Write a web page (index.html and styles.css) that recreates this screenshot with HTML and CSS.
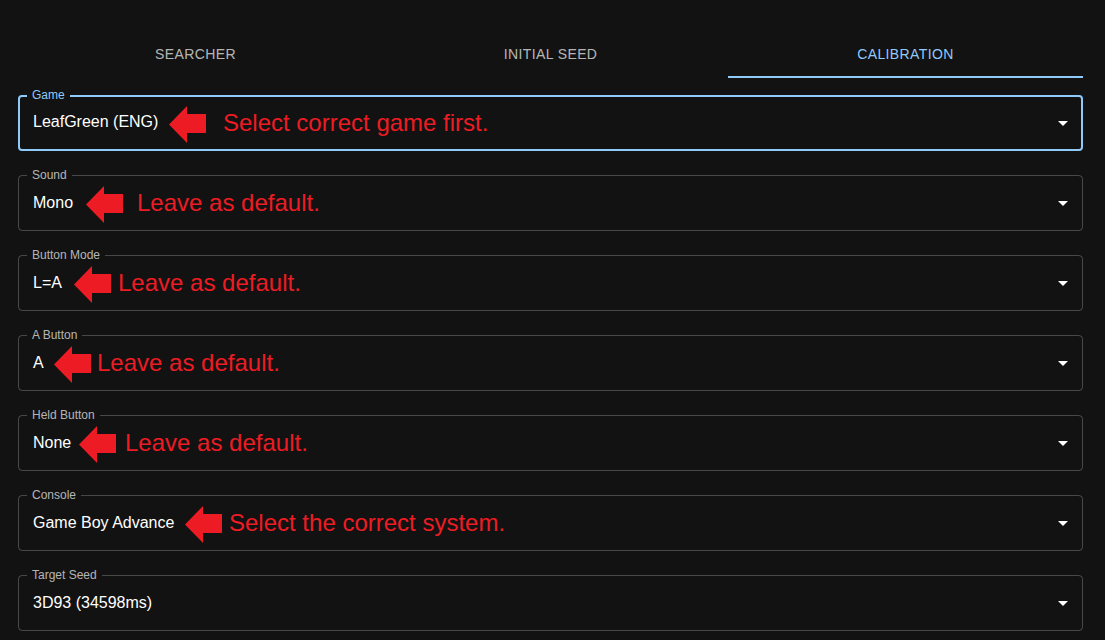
FILE: index.html
```html
<!DOCTYPE html>
<html lang="en">
<head>
<meta charset="utf-8">
<title>Calibration</title>
<link rel="stylesheet" href="styles.css">
</head>
<body>
<div class="page">
  <nav class="tabs">
    <div class="tab">Searcher</div>
    <div class="tab">Initial Seed</div>
    <div class="tab tab--active">Calibration</div>
  </nav>

  <form class="form">
    <div class="field field--focused">
      <span class="field__label">Game</span>
      <span class="field__value">LeafGreen (ENG)</span>
      <div class="note note--game">
        <svg class="note__arrow" viewBox="0 0 37 37" width="37" height="37"><polygon points="0,18.5 18,0 18,8 37,8 37,27 18,27 18,37" fill="#ed1c24"/></svg>
        <span class="note__text">Select correct game first.</span>
      </div>
      <svg class="field__icon" viewBox="0 0 24 24" width="24" height="24"><path d="M7 10l5 5 5-5z" fill="#fff"/></svg>
    </div>

    <div class="field">
      <span class="field__label">Sound</span>
      <span class="field__value">Mono</span>
      <div class="note note--sound">
        <svg class="note__arrow" viewBox="0 0 37 37" width="37" height="37"><polygon points="0,18.5 18,0 18,8 37,8 37,27 18,27 18,37" fill="#ed1c24"/></svg>
        <span class="note__text">Leave as default.</span>
      </div>
      <svg class="field__icon" viewBox="0 0 24 24" width="24" height="24"><path d="M7 10l5 5 5-5z" fill="#fff"/></svg>
    </div>

    <div class="field">
      <span class="field__label">Button Mode</span>
      <span class="field__value">L=A</span>
      <div class="note note--mode">
        <svg class="note__arrow" viewBox="0 0 37 37" width="37" height="37"><polygon points="0,18.5 18,0 18,8 37,8 37,27 18,27 18,37" fill="#ed1c24"/></svg>
        <span class="note__text">Leave as default.</span>
      </div>
      <svg class="field__icon" viewBox="0 0 24 24" width="24" height="24"><path d="M7 10l5 5 5-5z" fill="#fff"/></svg>
    </div>

    <div class="field">
      <span class="field__label">A Button</span>
      <span class="field__value">A</span>
      <div class="note note--abutton">
        <svg class="note__arrow" viewBox="0 0 37 37" width="37" height="37"><polygon points="0,18.5 18,0 18,8 37,8 37,27 18,27 18,37" fill="#ed1c24"/></svg>
        <span class="note__text">Leave as default.</span>
      </div>
      <svg class="field__icon" viewBox="0 0 24 24" width="24" height="24"><path d="M7 10l5 5 5-5z" fill="#fff"/></svg>
    </div>

    <div class="field">
      <span class="field__label">Held Button</span>
      <span class="field__value">None</span>
      <div class="note note--held">
        <svg class="note__arrow" viewBox="0 0 37 37" width="37" height="37"><polygon points="0,18.5 18,0 18,8 37,8 37,27 18,27 18,37" fill="#ed1c24"/></svg>
        <span class="note__text">Leave as default.</span>
      </div>
      <svg class="field__icon" viewBox="0 0 24 24" width="24" height="24"><path d="M7 10l5 5 5-5z" fill="#fff"/></svg>
    </div>

    <div class="field">
      <span class="field__label">Console</span>
      <span class="field__value">Game Boy Advance</span>
      <div class="note note--console">
        <svg class="note__arrow" viewBox="0 0 37 37" width="37" height="37"><polygon points="0,18.5 18,0 18,8 37,8 37,27 18,27 18,37" fill="#ed1c24"/></svg>
        <span class="note__text">Select the correct system.</span>
      </div>
      <svg class="field__icon" viewBox="0 0 24 24" width="24" height="24"><path d="M7 10l5 5 5-5z" fill="#fff"/></svg>
    </div>

    <div class="field">
      <span class="field__label">Target Seed</span>
      <span class="field__value">3D93 (34598ms)</span>
      <svg class="field__icon" viewBox="0 0 24 24" width="24" height="24"><path d="M7 10l5 5 5-5z" fill="#fff"/></svg>
    </div>
  </form>
</div>
</body>
</html>
```

FILE: styles.css
```css
html, body {
  margin: 0;
  padding: 0;
  background: #121212;
  font-family: "Liberation Sans", Arial, sans-serif;
  color: #fff;
}

.page {
  padding: 30px 22px 0 18px;
  height: 640px;
  box-sizing: border-box;
  overflow: hidden;
}

.tabs {
  display: grid;
  grid-template-columns: repeat(3, 1fr);
  height: 48px;
}

.tab {
  display: flex;
  align-items: center;
  justify-content: center;
  font-size: 14px;
  letter-spacing: 0.4px;
  text-transform: uppercase;
  color: rgba(255, 255, 255, 0.7);
  box-sizing: border-box;
}

.tab--active {
  color: #90caf9;
  border-bottom: 2px solid #90caf9;
  padding-top: 2px;
}

.form {
  margin-top: 17px;
  display: flex;
  flex-direction: column;
  gap: 24px;
}

.field {
  position: relative;
  height: 56px;
  box-sizing: border-box;
  border: 1px solid rgba(255, 255, 255, 0.23);
  border-radius: 4px;
  padding: 0 14px;
  display: flex;
  align-items: center;
}

.field--focused {
  border: 2px solid #90caf9;
  padding: 0 13px;
}

.field__label {
  position: absolute;
  top: -8px;
  left: 8px;
  padding: 0 5px;
  font-size: 12px;
  line-height: 14px;
  background: #121212;
  color: rgba(255, 255, 255, 0.7);
}

.field--focused .field__label {
  top: -9px;
  left: 7px;
  color: #90caf9;
}

.field__value {
  font-size: 16px;
  color: #fff;
}

.field--focused .field__value {
  margin-bottom: 2px;
}

.field__icon {
  margin-left: auto;
  margin-right: -7px;
  display: block;
}

.note {
  position: absolute;
  top: 10px;
  display: flex;
  align-items: center;
  height: 37px;
}

.field--focused .note {
  top: 9px;
}

.note__arrow {
  display: block;
  flex: none;
}

.note__text {
  font-size: 24px;
  color: #ed1c24;
  white-space: nowrap;
  margin-bottom: 4px;
}

.note--game { left: 149px; gap: 17px; }
.note--sound { left: 67px; gap: 14px; }
.note--mode { left: 55px; gap: 7px; }
.note--abutton { left: 35px; gap: 6px; }
.note--held { left: 60px; gap: 9px; }
.note--console { left: 166px; gap: 7px; }
```
